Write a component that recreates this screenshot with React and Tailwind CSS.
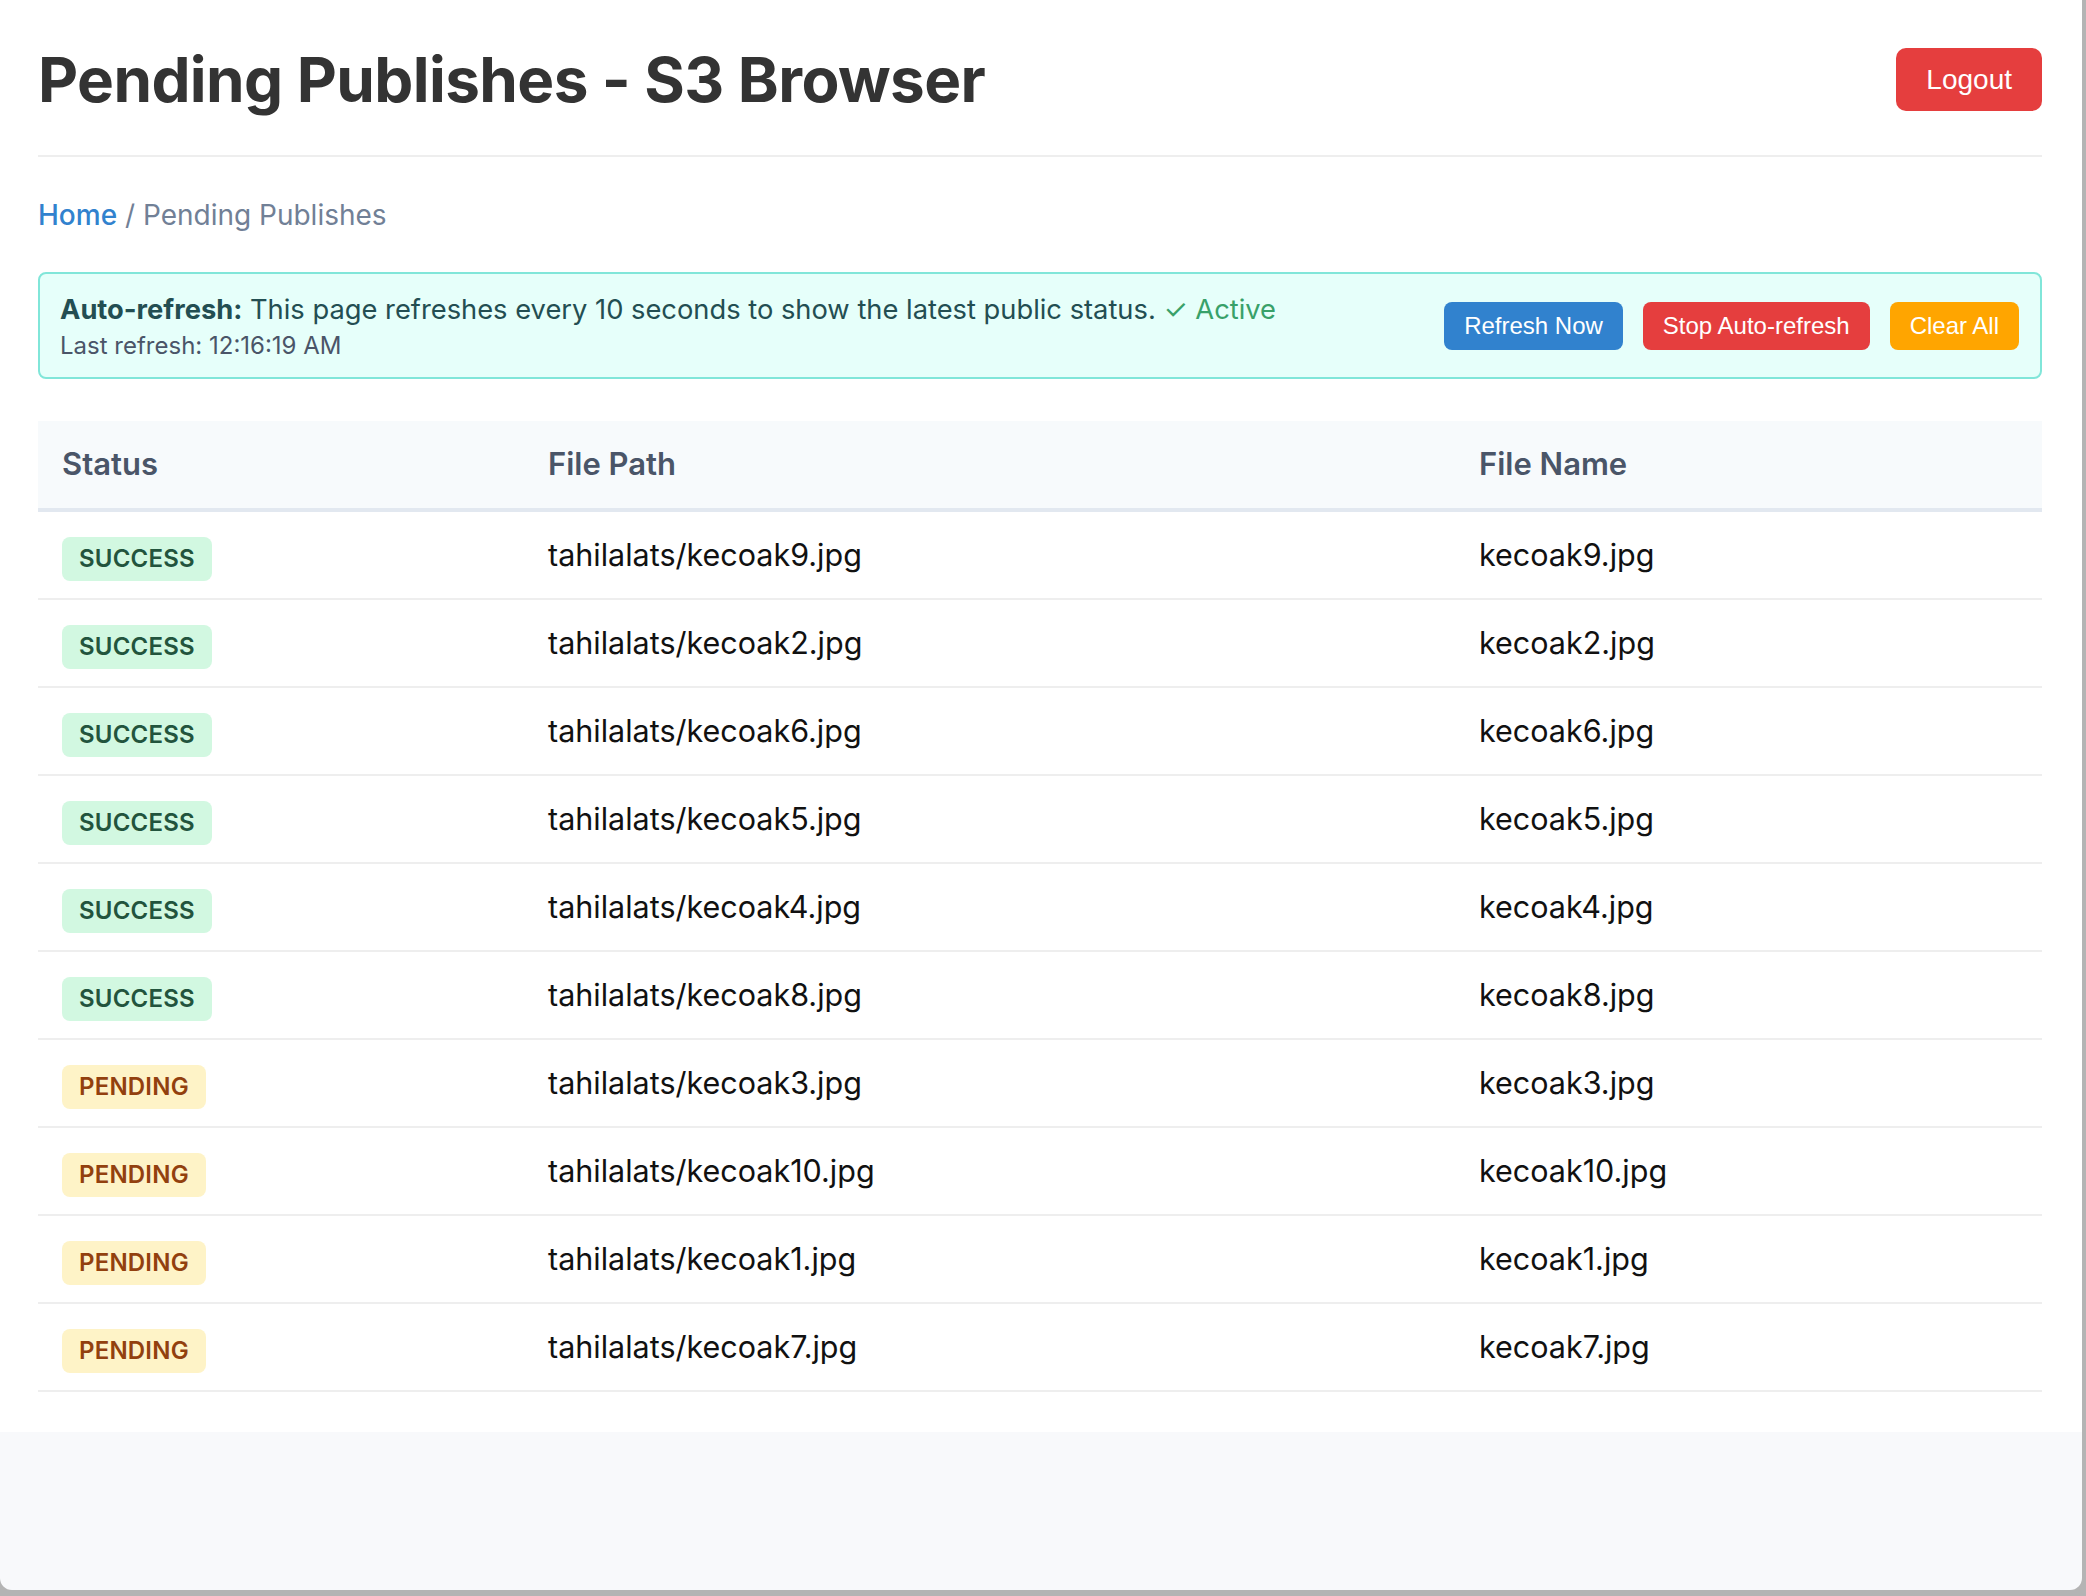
import React from "react";

const rows = [
  ["SUCCESS", "tahilalats/kecoak9.jpg", "kecoak9.jpg"],
  ["SUCCESS", "tahilalats/kecoak2.jpg", "kecoak2.jpg"],
  ["SUCCESS", "tahilalats/kecoak6.jpg", "kecoak6.jpg"],
  ["SUCCESS", "tahilalats/kecoak5.jpg", "kecoak5.jpg"],
  ["SUCCESS", "tahilalats/kecoak4.jpg", "kecoak4.jpg"],
  ["SUCCESS", "tahilalats/kecoak8.jpg", "kecoak8.jpg"],
  ["PENDING", "tahilalats/kecoak3.jpg", "kecoak3.jpg"],
  ["PENDING", "tahilalats/kecoak10.jpg", "kecoak10.jpg"],
  ["PENDING", "tahilalats/kecoak1.jpg", "kecoak1.jpg"],
  ["PENDING", "tahilalats/kecoak7.jpg", "kecoak7.jpg"],
];

function Badge({ status }) {
  const ok = status === "SUCCESS";
  return (
    <span
      className={
        "mt-[8px] inline-flex h-[44px] items-center rounded-[8px] px-[17px] text-[24px] font-semibold tracking-[0.2px] " +
        (ok ? "bg-[#d2f8e1] text-[#22543d]" : "bg-[#fef3c7] text-[#92400e]")
      }
    >
      {status}
    </span>
  );
}

export default function App() {
  return (
    <div className="w-[2086px] h-[1596px] bg-[#b4b4b4] overflow-hidden">
      <div className="w-[2082px] h-[1590px] bg-[#f8f9fb] rounded-b-[12px] overflow-hidden font-['Inter','Noto_Sans',sans-serif]">
        <div className="bg-white pl-[38px] pr-[40px] pb-[40px]">
          <div className="flex h-[157px] items-center justify-between border-b-2 border-[#eeeeee] pt-[4px]">
            <h1 className="text-[62px] font-bold leading-none text-[#333333] tracking-[-0.6px]">
              Pending Publishes - S3 Browser
            </h1>
            <button className="h-[63px] rounded-[10px] bg-[#e53e3e] px-[30px] text-[28px] text-white font-['Liberation_Sans',Arial,sans-serif]">
              Logout
            </button>
          </div>

          <div className="mt-[41px] text-[28px] leading-[35px]">
            <span className="font-medium text-[#3182ce]">Home</span>
            <span className="text-[#718096]"> / Pending Publishes</span>
          </div>

          <div className="mt-[39px] flex h-[107px] items-center justify-between rounded-[8px] border-2 border-[#81e6d9] bg-[#e6fffa] pl-[20px] pr-[21px]">
            <div className="flex flex-col gap-[6px] pt-[2px]">
              <div className="text-[27.3px] leading-[32px] text-[#234e52]">
                <span className="font-bold">Auto-refresh:</span> This page refreshes every 10 seconds to show the latest public status.{" "}
                <span className="text-[#38a169]">✓ Active</span>
              </div>
              <div className="text-[24px] leading-[28px] text-[#4a5568]">Last refresh: 12:16:19 AM</div>
            </div>
            <div className="flex gap-[20px] font-['Liberation_Sans',Arial,sans-serif] text-[24px] text-white">
              <button className="h-[48px] rounded-[8px] bg-[#3182ce] px-[20px]">Refresh Now</button>
              <button className="h-[48px] rounded-[8px] bg-[#e53e3e] px-[20px]">Stop Auto-refresh</button>
              <button className="h-[48px] rounded-[8px] bg-[#ffa500] px-[20px]">Clear All</button>
            </div>
          </div>

          <div className="mt-[42px]">
            <div className="grid h-[91px] grid-cols-[486px_931px_1fr] border-b-4 border-[#e2e8f0] bg-[#f7fafc] text-[31px] font-semibold text-[#4a5568]">
              <div className="flex items-center px-[24px]">Status</div>
              <div className="flex items-center px-[24px]">File Path</div>
              <div className="flex items-center px-[24px]">File Name</div>
            </div>
            {rows.map(([s, p, n]) => (
              <div
                key={p}
                className="grid h-[88px] grid-cols-[486px_931px_1fr] border-b-2 border-[#eeeeee] text-[30.5px] text-[#111111]"
              >
                <div className="flex items-center px-[24px]">
                  <Badge status={s} />
                </div>
                <div className="flex items-center px-[24px]">{p}</div>
                <div className="flex items-center px-[24px]">{n}</div>
              </div>
            ))}
          </div>
        </div>
      </div>
    </div>
  );
}
